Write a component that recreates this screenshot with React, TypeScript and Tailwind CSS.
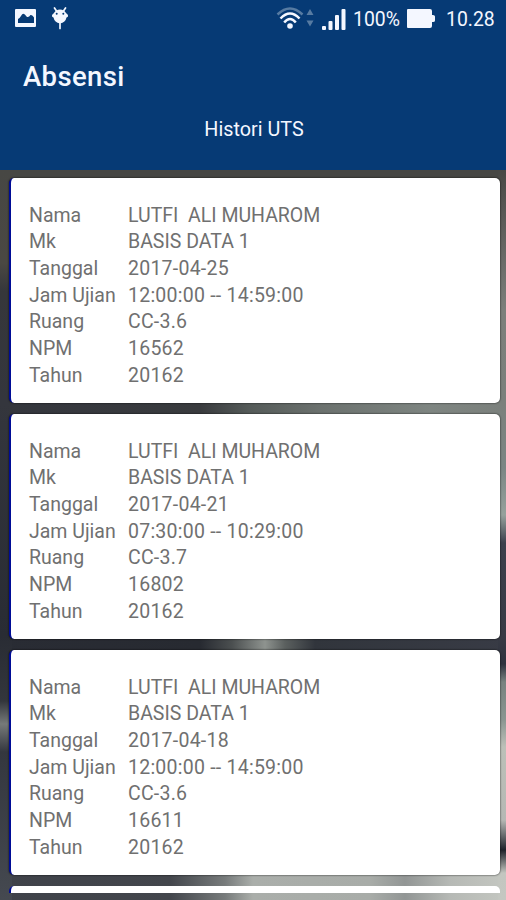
interface Exam {
  tanggal: string
  jam: string
  ruang: string
  npm: string
}

const exams: Exam[] = [
  { tanggal: '2017-04-25', jam: '12:00:00 -- 14:59:00', ruang: 'CC-3.6', npm: '16562' },
  { tanggal: '2017-04-21', jam: '07:30:00 -- 10:29:00', ruang: 'CC-3.7', npm: '16802' },
  { tanggal: '2017-04-18', jam: '12:00:00 -- 14:59:00', ruang: 'CC-3.6', npm: '16611' },
]

function Row({ label, value, numeric }: { label: string; value: string; numeric?: boolean }) {
  return (
    <div className="flex h-[26.7px] items-center">
      <dt className="w-[99px] shrink-0">{label}</dt>
      <dd className={numeric ? 'whitespace-pre tracking-[0.24px]' : 'whitespace-pre'}>{value}</dd>
    </div>
  )
}

function ExamCard({ exam }: { exam: Exam }) {
  return (
    <dl className="h-[225px] shrink-0 rounded-[5px] border-l-2 border-[#000c96] bg-white pt-[24px] pl-[18px] text-[19.5px] leading-none text-[#707070] shadow-[0_0_2px_rgba(0,0,0,0.9)]">
      <Row label="Nama" value="LUTFI  ALI MUHAROM" />
      <Row label="Mk" value="BASIS DATA 1" />
      <Row label="Tanggal" value={exam.tanggal} numeric />
      <Row label="Jam Ujian" value={exam.jam} numeric />
      <Row label="Ruang" value={exam.ruang} numeric />
      <Row label="NPM" value={exam.npm} numeric />
      <Row label="Tahun" value="20162" numeric />
    </dl>
  )
}

function StatusBar() {
  return (
    <div className="flex h-[38px] items-center text-[19.4px] leading-none">
      {/* Notifications */}
      <svg className="-mt-[2px] ml-[15px] h-[18px] w-[21px]" viewBox="0 0 21 18" fill="currentColor">
        <path fillRule="evenodd" d="M1 0h19a1 1 0 0 1 1 1v16a1 1 0 0 1-1 1H1a1 1 0 0 1-1-1V1a1 1 0 0 1 1-1Zm2 14h16V8.500q-1.500-3-3.500-2.500-2 3-4 1.500Q9 3.500 7 5.500 4.500 9.500 3 10Z" />
      </svg>
      <svg className="-mt-[2px] ml-[15px] h-[23px] w-[18px]" viewBox="0 0 18 23" fill="none" stroke="currentColor">
        <path d="m3.500 1 2 3m9-3-2 3M9 16v5.500" strokeWidth="1.700" strokeLinecap="round" />
        <path d="M3 6Q5 2.500 9 2.500T15 6l2 2q.500 2-1.500 2.500Q14.500 15.500 9 16.500 3.500 15.500 2.500 10.500.500 10 1 8Z" fill="currentColor" stroke="none" />
        <circle cx="5.700" cy="6.800" r="1" fill="#063a75" stroke="none" />
        <circle cx="12.300" cy="6.800" r="1" fill="#063a75" stroke="none" />
      </svg>

      {/* Wifi and data activity */}
      <svg className="-mt-[2px] ml-auto h-[24px] w-[38px]" viewBox="0 0 38 24" fill="none" stroke="currentColor" strokeWidth="2.500">
        <path d="M1.500 8.500Q14 -3.500 26.500 8.500" stroke="#577ba2" />
        <path d="M4.500 12.500Q14 2.500 23.500 12.500M8.200 16.500Q14 9.500 19.800 16.500" />
        <circle cx="14" cy="20" r="2.800" fill="currentColor" stroke="none" />
        <path d="m34 3 3.500 6h-7ZM34 20.500l-3.500-6h7Z" fill="#577ba2" stroke="none" />
      </svg>
      <svg className="ml-[8px] h-[21px] w-[24px]" viewBox="0 0 24 21" fill="currentColor">
        <rect y="17" width="4" height="4" rx="1" />
        <rect x="6.500" y="12" width="4" height="9" rx="1" />
        <rect x="13" y="6" width="4" height="15" rx="1" />
        <rect x="19.500" width="4" height="21" rx="1" />
      </svg>
      <span className="mt-[2px] ml-[7px] w-[48px] whitespace-nowrap">100%</span>
      <svg className="-mt-[2px] ml-[6px] h-[19px] w-[28px]" viewBox="0 0 28 19" fill="currentColor">
        <path d="M1 0h22q2 0 2 2v4h1q2 0 2 1.500v4q0 1.500-2 1.500h-1v4q0 2-2 2H1q-1 0-1-1V1q0-1 1-1Z" />
      </svg>
      <span className="mt-[2px] mr-[10px] ml-[11px] w-[50px] whitespace-nowrap">10.28</span>
    </div>
  )
}

export default function App() {
  return (
    <div className="flex h-[900px] w-full flex-col overflow-hidden bg-[#3c3e43] font-[Roboto,sans-serif]">
      <header className="h-[170px] shrink-0 bg-[#063a75] text-[#f4f7ff]">
        <StatusBar />
        <h1 className="pt-[22px] pl-[23px] text-[27.5px] leading-[34px] font-medium tracking-[0.35px]">Absensi</h1>
        <p className="pt-[24px] pl-[2px] text-center text-[19.8px] leading-[24px]">Histori UTS</p>
      </header>

      {/* Dimmed photo behind the list: side edges first, then the strips between cards */}
      <main className="flex flex-1 flex-col gap-[11px] overflow-hidden pt-[8px] pr-[6px] pl-[9px] [background:linear-gradient(#474744,#5a5a57_47px,#7c7f7b_140px,#7b807c_233px,#7b8684_298px,#96a19c_345px,#3c404c_373px,#383b45_466px,#2e323e_494px,#77827f_512px,#8a9691_550px,#bcc0b8_577px,#b5b8b4_650px,#1e222a_680px,#c3c6c0_703px,#c4c7c1)_right/8px_100%_no-repeat,linear-gradient(#474744,#4a4843_93px,#36373b_121px,#34363d_233px,#292c34_466px,#33363c_531px,#767a79_554px,#34373f_582px,#454950)_left/12px_100%_no-repeat,linear-gradient(90deg,#474744,#474744)_0_0/100%_20px_no-repeat,linear-gradient(90deg,#34363d,#393b3e_200px,#555b59_250px,#6b716e_320px,#7e8581_430px,#7b807c)_0_228px/100%_20px_no-repeat,linear-gradient(90deg,#292c34,#272a31_200px,#4b4f50_232px,#8e938f_265px,#5b605f_285px,#31353c_315px,#383b45)_0_464px/100%_20px_no-repeat,linear-gradient(90deg,#3f4249,#43464c_170px,#777b7b_225px,#aaaeaa_253px,#a8aca8_370px,#929695_405px,#b6b9b5_450px,#c4c7c1)_0_700px/100%_30px_no-repeat]">
        {exams.map((exam) => (
          <ExamCard key={exam.npm} exam={exam} />
        ))}
        <div className="h-[7px] shrink-0 rounded-t-[5px] border-l-2 border-[#000c96] bg-white" />
      </main>
    </div>
  )
}
